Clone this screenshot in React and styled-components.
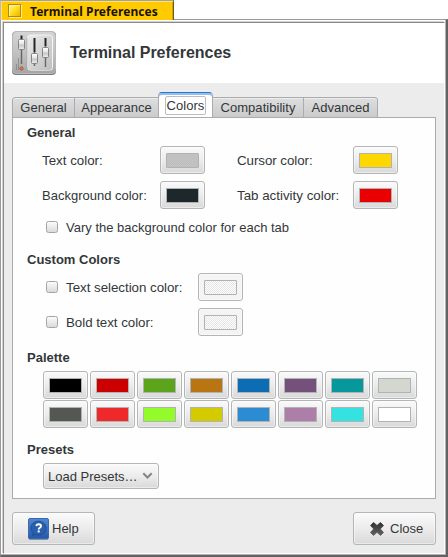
import React from "react";
import styled, { createGlobalStyle, css } from "styled-components";

const Global = createGlobalStyle`
  * { box-sizing: border-box; }
  html, body { margin: 0; background: #fff; }
  body { font: 13.33px/16px "Liberation Sans", Arial, sans-serif; color: #333739; }
  button { font: inherit; color: inherit; padding: 0; margin: 0; }
`;

const Desktop = styled.div`
  width: 448px;
  height: 557px;
  display: flex;
  flex-direction: column;
  overflow: hidden;
`;

const TitleTab = styled.div`
  width: 174px;
  height: 20px;
  flex: none;
  z-index: 1;
  margin-bottom: -1px;
  display: flex;
  align-items: center;
  gap: 8px;
  padding: 2px 0 0 7px;
  background: #ffcb00;
  border: solid;
  border-width: 1px 1px 0 1px;
  border-color: #a1a1a1 #6b5a22 #a1a1a1 #b9b9b9;
  box-shadow: inset 1px 1px 0 #ffe06a, inset -1px 0 0 #d8a200;
  font: bold 12px/18px "Noto Sans", sans-serif;
  color: #1a1300;
  white-space: nowrap;
`;

const TitleText = styled.span`
  letter-spacing: 0.06px;
`;

const CloseBox = styled.span`
  width: 14px;
  height: 14px;
  margin-top: -1px;
  border: 1px solid;
  border-color: #b58b00 #ffe98c #ffe98c #b58b00;
  box-shadow: inset -1px -1px 0 #b58b00, inset 1px 1px 0 #fff09a;
  background: linear-gradient(135deg, #fff27a 10%, #ffd91c 50%, #eab000 95%);
`;

const Frame = styled.div`
  flex: 1;
  display: flex;
  padding: 1px;
  border: solid;
  border-width: 1px 2px 2px 1px;
  border-color: #989898 #646262 #646262 #989898;
  background: #fdfdfd;
  box-shadow: inset -1px -1px 0 #b4b2b2;
`;

const Client = styled.div`
  flex: 1;
  display: flex;
  flex-direction: column;
  border: 1px solid;
  border-color: #8b8888 #fdfdfd #fdfdfd #8b8888;
  margin: 1px 0 0 1px;
  box-shadow: -1px -1px 0 #d4d2d2;
  background: #ececec;
`;

const Header = styled.header`
  height: 60px;
  flex: none;
  display: flex;
  align-items: center;
  gap: 13px;
  padding: 0 0 0 7px;
  background: #fff;
`;

const Heading = styled.h1`
  margin: 0;
  font-size: 16px;
  line-height: 20px;
  letter-spacing: -0.02px;
`;

const Tabs = styled.div`
  display: flex;
  align-items: flex-end;
  height: 35px;
  margin: 0 8px -1px;
  flex: none;
`;

const Tab = styled.button`
  width: ${(p) => p.$w}px;
  height: 21px;
  border: 1px solid #a9abac;
  margin-right: -1px;
  background: linear-gradient(#dedede, #cbcbcb);
  box-shadow: inset 0 1px 0 #ededed;
  border-radius: ${(p) => p.$radius || "0"};
  font-size: 13px;
  line-height: 17px;
  letter-spacing: 0.04px;
  white-space: nowrap;
  ${(p) =>
    p.$active &&
    css`
      height: 26px;
      border-bottom: 0;
      border-top: 1px solid #2a76c6;
      border-radius: 4px 4px 0 0;
      background: #fff;
      box-shadow: inset 0 2px 0 #8fc0ee;
      padding: 0 0 1px;
    `}
`;

const Focus = styled.span`
  display: block;
  width: 41px;
  height: 19px;
  margin: 1px auto 0;
  border: 1px solid #bdbdbd;
  border-radius: 2px;
  line-height: 18px;
`;

const Page = styled.main`
  height: 382px;
  flex: none;
  margin: 0 8px;
  padding: 7px 14px 0;
  background: #fefefe;
  border: 1px solid #a9abac;
`;

const Section = styled.section`
  height: ${(p) => p.$h}px;
`;

const SectionTitle = styled.h2`
  margin: 0;
  height: 21px;
  font-size: 13px;
  line-height: 16px;
`;

const ColorGrid = styled.div`
  display: grid;
  grid-template-columns: 118px 77px 116px 45px;
  grid-auto-rows: 28px;
  row-gap: 7px;
  align-items: center;
  padding-left: 15px;
`;

const CheckRow = styled.label`
  display: flex;
  align-items: center;
  height: ${(p) => p.$h}px;
  margin-top: ${(p) => p.$mt || 0}px;
  padding-left: 19px;
`;

const Check = styled.span`
  width: 12px;
  height: 12px;
  flex: none;
  margin-right: 8px;
  border: 1px solid #a3a5a6;
  border-radius: 2.5px;
  background: linear-gradient(#fbfbfb, #dadada);
`;

const Label = styled.span`
  white-space: nowrap;
  padding-top: ${(p) => (p.$plain ? 0 : 2)}px;
  letter-spacing: ${(p) => p.$ls || 0}px;
  ${(p) => p.$w && `width: ${p.$w}px;`}
  ${(p) => p.$small && "font-size: 13px;"}
`;

const buttonFace = css`
  border: 1px solid #b4b5b6;
  border-radius: 3px;
  background: linear-gradient(#fafafa, #ececec 50%, #d9d9d9);
  box-shadow: inset 0 0 0 1px rgba(255, 255, 255, 0.45);
`;

const ColorButton = styled.button`
  ${buttonFace}
  width: 45px;
  height: 28px;
  display: flex;
  align-items: center;
  justify-content: center;
  padding-top: 1px;
  ${(p) => p.disabled && "background: #f4f4f3;"}
`;

const Swatch = styled.span`
  width: 33px;
  height: 15px;
  border: 1px solid #b0b3b3;
  background: ${(p) => p.$color};
  ${(p) =>
    p.$hatched &&
    css`
      border-radius: 1px;
      background: repeating-conic-gradient(${p.$color} 0 25%, ${p.$alt} 0 50%) 0 0 / 2px 2px;
    `}
`;

const PaletteGrid = styled.div`
  display: grid;
  grid-template-columns: repeat(8, 45px);
  gap: 1px 2px;
  padding-left: 16px;
`;

const Combo = styled.button`
  ${buttonFace}
  width: 116px;
  height: 26px;
  margin-left: 16px;
  padding: 0 5px 0 4px;
  display: flex;
  align-items: center;
  justify-content: space-between;
`;

const Actions = styled.footer`
  display: flex;
  justify-content: space-between;
  padding: 13px 8px 0;
`;

const ActionButton = styled.button`
  ${buttonFace}
  width: 83px;
  height: 33px;
  display: flex;
  align-items: center;
  padding-left: ${(p) => p.$pad}px;
  gap: ${(p) => p.$gap}px;
`;

const Picture = styled.svg`
  display: block;
  flex: none;
`;

function MixerIcon() {
  return (
    <Picture width="46" height="46" viewBox="0 0 46 46">
      <defs>
        <linearGradient id="plate" x1="0" y1="0" x2="0" y2="1">
          <stop offset="0" stopColor="#d4d4d4" />
          <stop offset=".5" stopColor="#c2c2c2" />
          <stop offset="1" stopColor="#a6a6a6" />
        </linearGradient>
        <linearGradient id="panel" x1="0" y1="0" x2="1" y2="1">
          <stop offset="0" stopColor="#ececec" />
          <stop offset="1" stopColor="#bdbdbd" />
        </linearGradient>
        <linearGradient id="knob" x1="0" y1="0" x2="0" y2="1">
          <stop offset="0" stopColor="#fff" />
          <stop offset=".48" stopColor="#e4e4e4" />
          <stop offset=".52" stopColor="#c4c4c4" />
          <stop offset="1" stopColor="#eee" />
        </linearGradient>
      </defs>
      <rect x="1" y="1.5" width="44" height="43.5" rx="4" fill="#808080" />
      <rect x="1.5" y="1.5" width="43" height="42" rx="4" fill="url(#plate)" stroke="#b8b8b8" />
      <rect x="16.5" y="5" width="25" height="35.5" rx="3" fill="url(#panel)" stroke="#f5f5f5" />
      <path d="M16 8v30q0 3 3 3h21" fill="none" stroke="#a2a2a2" strokeWidth=".7" />
      <path d="M10.500 6v28M23.500 8v28M34.500 8v29" stroke="#666" strokeWidth="1.4" />
      <path d="M10.500 5.500v4M23.500 8v14M34.500 8v8" stroke="#252525" strokeWidth="1.8" />
      <g fill="url(#knob)" stroke="#848484">
        <rect x="7.500" y="9.500" width="6" height="10" rx="1" />
        <rect x="20.500" y="23.500" width="6" height="10" rx="1" />
        <rect x="31.500" y="17.500" width="6" height="10" rx="1" />
      </g>
      <path d="M5.500 34v6M7.500 28v12" stroke="#888" strokeWidth=".8" />
      <circle cx="10.500" cy="38.500" r="1.600" fill="#ef7a50" stroke="#a33a22" strokeWidth=".8" />
    </Picture>
  );
}

function HelpIcon() {
  return (
    <Picture width="21" height="22" viewBox="0 0 21 22">
      <defs>
        <linearGradient id="help" x1="0" y1="0" x2="0" y2="1">
          <stop offset="0" stopColor="#5088d2" />
          <stop offset="1" stopColor="#2459a8" />
        </linearGradient>
      </defs>
      <rect x="0.500" y="1" width="20" height="20.500" rx="1.500" fill="#1e467f" />
      <rect x="0.500" y=".5" width="20" height="20" rx="1.500" fill="url(#help)" stroke="#3a69ad" />
      <path
        d="M10.500 3.200c4.300 0 7.500 3 7.500 6.900s-3.200 6.900-7.500 6.900q-2 0-3.600-.8L4.700 18l.4-3.200Q3 13 3 10.100c0-3.900 3.200-6.900 7.500-6.900z"
        fill="#2a60b0"
        stroke="#1c4788"
        strokeWidth=".8"
      />
      <path d="M8.200 7.900q.4-1.600 2.500-1.600 2.300 0 2.300 1.700 0 1.100-1.100 1.700-1.200.7-1.200 1.700" fill="none" stroke="#fff" strokeWidth="1.900" />
      <rect x="9.700" y="12.400" width="2" height="2" fill="#fff" />
    </Picture>
  );
}

function CrossIcon() {
  return (
    <Picture width="14" height="14" viewBox="0 0 14 14">
      <defs>
        <linearGradient id="cross" x1="0" y1="0" x2="0" y2="1">
          <stop offset="0" stopColor="#303030" />
          <stop offset="1" stopColor="#646464" />
        </linearGradient>
      </defs>
      <path
        d="M3.500.5 7 3.500 10.500.5 13.500 3.500 10.300 7 13.500 10.500 10.500 13.500 7 10.300 3.500 13.500.5 10.500 3.700 7 .5 3.500z"
        fill="url(#cross)"
        stroke="url(#cross)"
        strokeWidth=".8"
        strokeLinejoin="round"
      />
    </Picture>
  );
}

function ChevronIcon() {
  return (
    <Picture width="11" height="8" viewBox="0 0 11 8">
      <path d="M1.300 1.300 5.500 5.500 9.700 1.300" fill="none" stroke="#858585" strokeWidth="2" />
    </Picture>
  );
}

function Color({ color, alt, disabled }) {
  return (
    <ColorButton disabled={disabled}>
      <Swatch $color={color} $alt={alt} $hatched={!!alt} />
    </ColorButton>
  );
}

const PALETTE = [
  "#000000", "#cc0000", "#5ca41a", "#b97512", "#0c6db5", "#75507b", "#06989a", "#d3d7cf",
  "#555753", "#ef2929", "#92fb29", "#d3cb00", "#2b8bd3", "#ad7fa8", "#34e2e2", "#ffffff",
];

export default function App() {
  return (
    <Desktop>
      <Global />
      <TitleTab>
        <CloseBox />
        <TitleText>Terminal Preferences</TitleText>
      </TitleTab>
      <Frame>
        <Client>
          <Header>
            <MixerIcon />
            <Heading>Terminal Preferences</Heading>
          </Header>
          <Tabs>
            <Tab $w={63} $radius="3px 0 0 0">General</Tab>
            <Tab $w={85}>Appearance</Tab>
            <Tab $w={55} $active>
              <Focus>Colors</Focus>
            </Tab>
            <Tab $w={92}>Compatibility</Tab>
            <Tab $w={75} $radius="0 3px 0 0">Advanced</Tab>
          </Tabs>
          <Page>
            <Section $h={127}>
              <SectionTitle>General</SectionTitle>
              <ColorGrid>
                <Label>Text color:</Label>
                <Color color="#c4c4c4" alt="#bebebe" />
                <Label $ls={-0.05}>Cursor color:</Label>
                <Color color="#ffd700" />
                <Label $small>Background color:</Label>
                <Color color="#1e272b" />
                <Label>Tab activity color:</Label>
                <Color color="#ea0000" />
              </ColorGrid>
              <CheckRow $h={20} $mt={8}>
                <Check />
                <Label $small>Vary the background color for each tab</Label>
              </CheckRow>
            </Section>
            <Section $h={98}>
              <SectionTitle>Custom Colors</SectionTitle>
              <CheckRow $h={28}>
                <Check />
                <Label $w={132} $ls={-0.03}>Text selection color:</Label>
                <Color color="#ffffff" alt="#e4e4e4" disabled />
              </CheckRow>
              <CheckRow $h={28} $mt={7}>
                <Check />
                <Label $w={132} $ls={-0.04}>Bold text color:</Label>
                <Color color="#ffffff" alt="#e4e4e4" disabled />
              </CheckRow>
            </Section>
            <Section $h={92}>
              <SectionTitle>Palette</SectionTitle>
              <PaletteGrid>
                {PALETTE.map((c) => (
                  <Color key={c} color={c} />
                ))}
              </PaletteGrid>
            </Section>
            <Section $h={50}>
              <SectionTitle>Presets</SectionTitle>
              <Combo>
                <Label $small>Load Presets…</Label>
                <ChevronIcon />
              </Combo>
            </Section>
          </Page>
          <Actions>
            <ActionButton $pad={15} $gap={3}>
              <HelpIcon />
              <Label $small $plain>Help</Label>
            </ActionButton>
            <ActionButton $pad={16} $gap={6}>
              <CrossIcon />
              <Label $small $plain>Close</Label>
            </ActionButton>
          </Actions>
        </Client>
      </Frame>
    </Desktop>
  );
}
